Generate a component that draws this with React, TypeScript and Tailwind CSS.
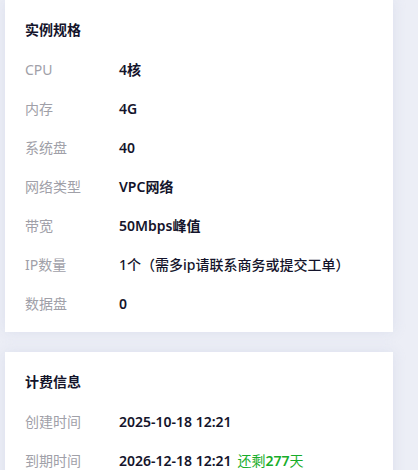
const font = { fontFamily: '"Noto Sans", "Noto Sans CJK SC", sans-serif' };

interface Row {
  label: string;
  value: React.ReactNode;
}

const specRows: Row[] = [
  { label: "CPU", value: "4核" },
  { label: "内存", value: "4G" },
  { label: "系统盘", value: "40" },
  { label: "网络类型", value: "VPC网络" },
  { label: "带宽", value: "50Mbps峰值" },
  {
    label: "IP数量",
    value: <span className="font-medium">1个（需多ip请联系商务或提交工单）</span>,
  },
  { label: "数据盘", value: "0" },
];

const billingRows: Row[] = [
  { label: "创建时间", value: "2025-10-18 12:21" },
  {
    label: "到期时间",
    value: (
      <>
        2026-12-18 12:21
        <span className="ml-[6px] font-normal text-[#18ad2a]">
          还剩<span className="font-semibold">277</span>天
        </span>
      </>
    ),
  },
];

const Card = ({ title, rows }: { title: string; rows: Row[] }) => (
  <div className="bg-white px-5 pt-5 pb-[9px] shadow-[0_0_12px_rgba(200,206,226,0.45)]">
    <h3 className="h-5 text-[14px] leading-5 font-bold text-[#14142b]">{title}</h3>
    <div className="mt-[10px]">
      {rows.map((row, index: number) => (
        <div key={index} className="flex h-[39px] items-center text-[14px]">
          <div className="w-[94px] shrink-0 text-[#a0a0a8]">{row.label}</div>
          <div className="font-semibold text-[#14142b]">{row.value}</div>
        </div>
      ))}
    </div>
  </div>
);

export default function App() {
  return (
    <div className="min-h-[470px] bg-[#eceef6] pl-[5px] pr-[25px]" style={font}>
      <Card title="实例规格" rows={specRows} />
      <div className="h-5" />
      <Card title="计费信息" rows={billingRows} />
    </div>
  );
}
